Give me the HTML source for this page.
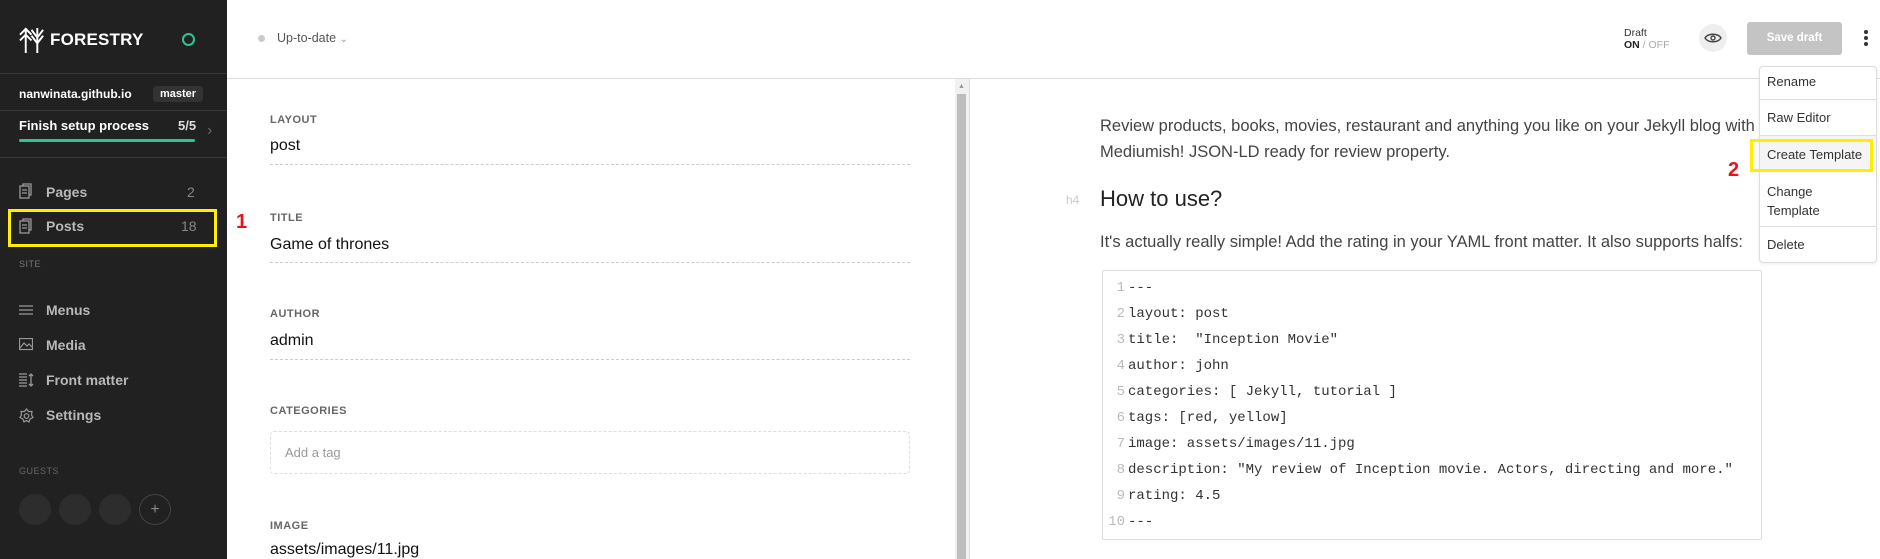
<!DOCTYPE html>
<html><head><meta charset="utf-8"><style>
*{margin:0;padding:0;box-sizing:border-box}
body{width:1880px;height:559px;overflow:hidden;background:#fff;font-family:"Liberation Sans",sans-serif;position:relative}
.a{position:absolute;white-space:nowrap}
#sb{position:absolute;left:0;top:0;width:227px;height:559px;background:#212121}
.nav{color:#b8b8b8;font-size:14px;font-weight:bold}
.lbl{color:#666;font-size:11px;font-weight:bold;letter-spacing:.5px}
.val{color:#111;font-size:16px}
.dash{position:absolute;left:270px;width:640px;border-top:1px dashed #ccc}
.p{color:#444;font-size:16.5px}
.code{font-family:"Liberation Mono",monospace;font-size:14px;color:#333}
.ln{display:inline-block;width:22px;text-align:right;color:#bbb;margin-right:3px}
.mi{color:#333;font-size:13px}
.sep{position:absolute;left:1760px;width:116px;border-top:1px solid #ddd}
</style></head><body>
<div id="sb">
<svg class="a" style="left:19px;top:26px" width="26" height="27" viewBox="0 0 27 28" fill="none" stroke="#fff" stroke-width="2"><path d="M7 2V28M1 9L7 3L13 9M1 15L7 9L13 15M19 2V28M13 4L19 12L25 4M13 10L19 18L25 10"/></svg>
<div class="a" style="left:50px;top:30px;color:#fff;font-size:17px;font-weight:bold;letter-spacing:.2px">FORESTRY</div>
<div class="a" style="left:182px;top:33px;width:13px;height:13px;border:2px solid #2fc58f;border-radius:50%"></div>
<div class="a" style="left:0;top:73px;width:227px;border-top:1px solid #3a3a3a"></div>
<div class="a" style="left:19px;top:87px;color:#fff;font-size:12px;font-weight:bold">nanwinata.github.io</div>
<div class="a" style="left:153px;top:86px;width:50px;height:16px;background:#333;border-radius:4px;color:#fff;font-size:11px;font-weight:bold;text-align:center;line-height:16px">master</div>
<div class="a" style="left:0;top:110px;width:227px;border-top:1px solid #3a3a3a"></div>
<div class="a" style="left:19px;top:118px;color:#fff;font-size:13px;font-weight:bold">Finish setup process</div>
<div class="a" style="left:178px;top:118px;color:#ddd;font-size:13px;font-weight:bold">5/5</div>
<div class="a" style="left:19px;top:139px;width:176px;height:3px;background:#2fc58f;border-radius:2px"></div>
<div class="a" style="left:207px;top:122px;color:#666;font-size:16px">›</div>
<div class="a" style="left:0;top:157px;width:227px;border-top:1px solid #3a3a3a"></div>
<svg class="a" style="left:19px;top:183px" width="14" height="16" fill="none" stroke="#999" stroke-width="1.3"><rect x="1" y="3" width="9" height="12"/><path d="M4 3V1H12V12H10M3 7H8M3 10H8"/></svg>
<div class="a nav" style="left:46px;top:184px">Pages</div><div class="a nav" style="left:187px;top:184px;color:#888;font-weight:normal">2</div>
<svg class="a" style="left:19px;top:218px" width="14" height="16" fill="none" stroke="#999" stroke-width="1.3"><rect x="1" y="3" width="9" height="12"/><path d="M4 3V1H12V12H10M3 7H8M3 10H8"/></svg>
<div class="a nav" style="left:46px;top:218px">Posts</div><div class="a nav" style="left:181px;top:218px;color:#888;font-weight:normal">18</div>
<div class="a" style="left:8px;top:209px;width:209px;height:38px;border:3px solid #ffee00"></div>
<div class="a" style="left:19px;top:259px;color:#777;font-size:9px;letter-spacing:.5px">SITE</div>
<svg class="a" style="left:19px;top:304px" width="14" height="12" stroke="#999" stroke-width="1.3"><path d="M0 2H14M0 6H14M0 10H14"/></svg>
<div class="a nav" style="left:46px;top:302px">Menus</div>
<svg class="a" style="left:19px;top:338px" width="14" height="13" fill="none" stroke="#999" stroke-width="1.2"><rect x=".5" y=".5" width="13" height="11"/><path d="M1 10L5 5L8 8L10 6L13 9"/></svg>
<div class="a nav" style="left:46px;top:337px">Media</div>
<svg class="a" style="left:19px;top:373px" width="15" height="14" stroke="#999" stroke-width="1.3"><path d="M0 1H8M0 4H8M0 7H8M0 10H8M0 13H8M12 1V13M10 3L12 1L14 3M10 11L12 13L14 11"/></svg>
<div class="a nav" style="left:46px;top:372px">Front matter</div>
<svg class="a" style="left:19px;top:408px" width="15" height="15" fill="none" stroke="#999" stroke-width="1.2"><path d="M7.5 1L9.5 3.5L13 3.5L12.5 7L14 9.5L11 11L10 14L7.5 12.5L5 14L4 11L1 9.5L2.5 7L2 3.5L5.5 3.5Z"/><circle cx="7.5" cy="8" r="2.3"/></svg>
<div class="a nav" style="left:46px;top:407px">Settings</div>
<div class="a" style="left:19px;top:466px;color:#666;font-size:9px;letter-spacing:.5px">GUESTS</div>
<div class="a" style="left:19px;top:494px;width:32px;height:31px;border-radius:50%;background:#2d2d2d"></div>
<div class="a" style="left:59px;top:494px;width:32px;height:31px;border-radius:50%;background:#2d2d2d"></div>
<div class="a" style="left:99px;top:494px;width:32px;height:31px;border-radius:50%;background:#2d2d2d"></div>
<div class="a" style="left:139px;top:494px;width:32px;height:31px;border-radius:50%;border:1px solid #444;color:#888;text-align:center;line-height:29px;font-size:16px">+</div>
</div>
<!-- header -->
<div class="a" style="left:227px;top:78px;width:1653px;border-top:1px solid #ddd"></div>
<div class="a" style="left:258px;top:35px;width:7px;height:7px;border-radius:50%;background:#ccc"></div>
<div class="a" style="left:277px;top:31px;color:#555;font-size:12.5px">Up-to-date <span style="color:#999;font-size:10px">&#8964;</span></div>
<div class="a" style="left:1624px;top:27px;color:#333;font-size:10.5px;line-height:12px">Draft<br><b style="color:#222">ON</b> <span style="color:#aaa">/ OFF</span></div>
<div class="a" style="left:1699px;top:24px;width:28px;height:28px;border-radius:50%;background:#eee"></div>
<svg class="a" style="left:1704px;top:31px" width="18" height="14" fill="none" stroke="#444" stroke-width="1.4"><path d="M1 7C4 2 14 2 17 7C14 12 4 12 1 7Z"/><circle cx="9" cy="7" r="2"/></svg>
<div class="a" style="left:1747px;top:22px;width:95px;height:33px;background:#c4c4c4;border-radius:3px;color:#fff;font-size:11.5px;font-weight:bold;text-align:center;line-height:33px">Save draft</div>
<div class="a" style="left:1864px;top:30px;width:4px;height:4px;border-radius:50%;background:#333;box-shadow:0 6px 0 #333,0 12px 0 #333"></div>
<!-- left pane -->
<div class="a" style="left:955px;top:79px;width:14px;height:480px;background:#f1f1f1"></div>
<div class="a" style="left:957px;top:94px;width:9px;height:465px;background:#bdbdbd"></div>
<div class="a" style="left:958px;top:83px;color:#999;font-size:7px">▲</div>
<div class="a" style="left:969px;top:79px;width:1px;height:480px;background:#ddd"></div>
<div class="a lbl" style="left:270px;top:114px">LAYOUT</div><div class="a val" style="left:270px;top:137px">post</div><div class="dash" style="top:164px"></div>
<div class="a lbl" style="left:270px;top:212px">TITLE</div><div class="a val" style="left:270px;top:236px">Game of thrones</div><div class="dash" style="top:262px"></div>
<div class="a lbl" style="left:270px;top:308px">AUTHOR</div><div class="a val" style="left:270px;top:332px">admin</div><div class="dash" style="top:359px"></div>
<div class="a lbl" style="left:270px;top:405px">CATEGORIES</div>
<div class="a" style="left:270px;top:431px;width:640px;height:43px;border:1px dashed #ddd;border-radius:4px"></div>
<div class="a" style="left:285px;top:445px;color:#999;font-size:13px">Add a tag</div>
<div class="a lbl" style="left:270px;top:520px">IMAGE</div><div class="a val" style="left:270px;top:541px">assets/images/11.jpg</div>
<div class="a" style="left:236px;top:211px;color:#e8141c;font-size:20px;font-weight:bold">1</div>
<!-- right pane -->
<div class="a p" style="left:1100px;top:113px;line-height:26px">Review products, books, movies, restaurant and anything you like on your Jekyll blog with<br>Mediumish! JSON-LD ready for review property.</div>
<div class="a" style="left:1066px;top:193px;color:#ccc;font-size:12px">h4</div>
<div class="a" style="left:1100px;top:186px;color:#222;font-size:22px">How to use?</div>
<div class="a p" style="left:1100px;top:233px">It's actually really simple! Add the rating in your YAML front matter. It also supports halfs:</div>
<div class="a" style="left:1102px;top:270px;width:660px;height:270px;border:1px solid #ddd;border-radius:2px"></div>
<div class="a code" style="left:1103px;top:275px;line-height:26px">
<div><span class="ln">1</span>---</div>
<div><span class="ln">2</span>layout: post</div>
<div><span class="ln">3</span>title:&nbsp; "Inception Movie"</div>
<div><span class="ln">4</span>author: john</div>
<div><span class="ln">5</span>categories: [ Jekyll, tutorial ]</div>
<div><span class="ln">6</span>tags: [red, yellow]</div>
<div><span class="ln">7</span>image: assets/images/11.jpg</div>
<div><span class="ln">8</span>description: "My review of Inception movie. Actors, directing and more."</div>
<div><span class="ln">9</span>rating: 4.5</div>
<div><span class="ln">10</span>---</div>
</div>
<!-- menu -->
<div class="a" style="left:1759px;top:66px;width:118px;height:197px;background:#fff;border:1px solid #ddd;border-radius:4px;box-shadow:0 1px 3px rgba(0,0,0,.08)"></div>
<div class="a mi" style="left:1767px;top:74px">Rename</div>
<div class="sep" style="top:99px"></div>
<div class="a mi" style="left:1767px;top:110px">Raw Editor</div>
<div class="sep" style="top:135px"></div>
<div class="a" style="left:1760px;top:136px;width:116px;height:36px;background:#f5f5f5"></div>
<div class="a mi" style="left:1767px;top:147px">Create Template</div>
<div class="a" style="left:1750px;top:139px;width:123px;height:33px;border:3px solid #ffee00"></div>
<div class="a mi" style="left:1767px;top:182px;line-height:19px">Change<br>Template</div>
<div class="sep" style="top:226px"></div>
<div class="a mi" style="left:1767px;top:237px">Delete</div>
<div class="a" style="left:1728px;top:159px;color:#e8141c;font-size:20px;font-weight:bold">2</div>
</body></html>
